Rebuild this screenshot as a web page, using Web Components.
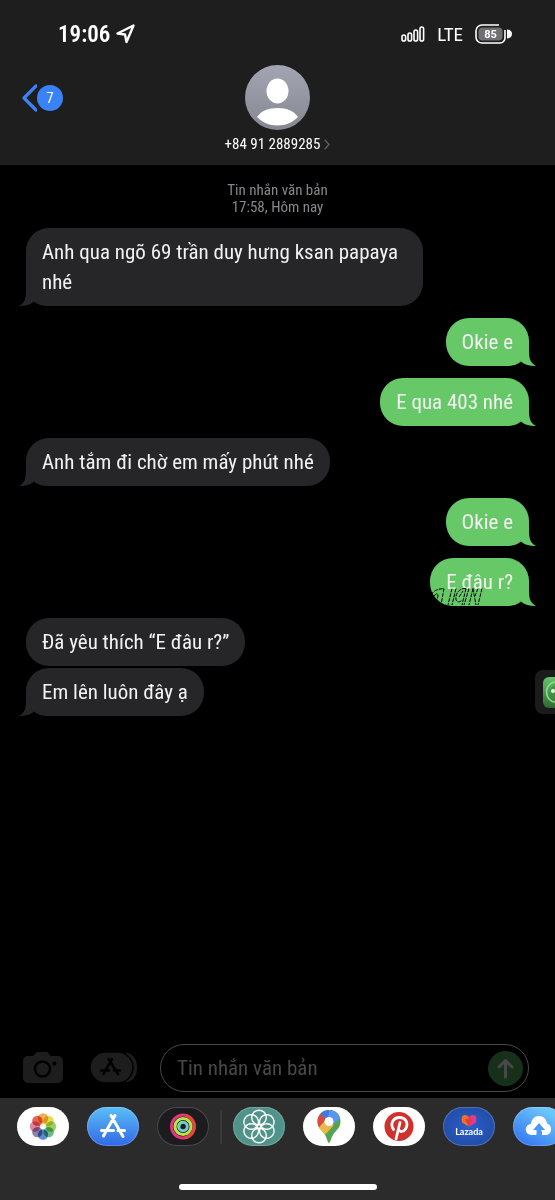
<!DOCTYPE html>
<html lang="vi">
<head>
<meta charset="utf-8">
<meta name="viewport" content="width=device-width, initial-scale=1">
<title>Tin nhắn</title>
<style>
  body {
    margin: 0;
    background: #000;
    color: #f2f2f2;
    font-family: "Roboto Condensed", Roboto, sans-serif;
  }
</style>
</head>
<body>
<message-screen>
  <status-bar slot="header" time="19:06" network="LTE" battery="85"></status-bar>
  <contact-bar slot="header" unread="7">+84 91 2889285</contact-bar>
  <chat-stamp>Tin nhắn văn bản<br>17:58, Hôm nay</chat-stamp>
  <chat-bubble tail>Anh qua ngõ 69 trần duy hưng ksan papaya nhé</chat-bubble>
  <chat-bubble sent tail>Okie e</chat-bubble>
  <chat-bubble sent tail>E qua 403 nhé</chat-bubble>
  <chat-bubble tail>Anh tắm đi chờ em mấy phút nhé</chat-bubble>
  <chat-bubble sent tail>Okie e</chat-bubble>
  <chat-bubble sent tail scribble>E đâu r?</chat-bubble>
  <chat-bubble stacked>Đã yêu thích “E đâu r?”</chat-bubble>
  <chat-bubble tail peek>Em lên luôn đây ạ</chat-bubble>
  <message-composer slot="footer" placeholder="Tin nhắn văn bản"></message-composer>
  <app-drawer slot="footer">
    <app-pill app="photos"></app-pill>
    <app-pill app="store"></app-pill>
    <app-pill app="rings"></app-pill>
    <drawer-divider></drawer-divider>
    <app-pill app="flower"></app-pill>
    <app-pill app="maps"></app-pill>
    <app-pill app="pinterest"></app-pill>
    <app-pill app="lazada">Lazada</app-pill>
    <app-pill app="cloud"></app-pill>
  </app-drawer>
</message-screen>

<script>
class BaseElement extends HTMLElement {
  connectedCallback() {
    if (!this.shadowRoot) {
      this.attachShadow({ mode: "open" }).innerHTML = this.render()
    }
  }
}

// Page frame: header, scrolling thread, footer
class MessageScreen extends BaseElement {
  render() {
    return `
      <style>
        :host { display: flex; flex-direction: column; min-height: 100vh; overflow: hidden; }
        header { background: #1e1e1e; padding-bottom: 12px; }
        main {
          flex: 1;
          display: flex;
          flex-direction: column;
          align-items: flex-start;
          gap: 12px;
          padding: 17px 26px 24px;
        }
      </style>
      <header><slot name="header"></slot></header>
      <main><slot></slot></main>
      <footer><slot name="footer"></slot></footer>`
  }
}

class StatusBar extends BaseElement {
  render() {
    return `
      <style>
        :host {
          display: flex;
          align-items: center;
          justify-content: space-between;
          padding: 18px 43px 0 58px;
          height: 32px;
          color: #fff;
        }
        .group { display: flex; align-items: center; }
        .time { gap: 6px; font-size: 23px; font-weight: 600; }
        .signal { gap: 12px; font-size: 19px; }
        svg { display: block; }
        text { font: 700 11px Roboto, sans-serif; fill: #fff; }
      </style>
      <div class="group time">
        <span>${this.getAttribute("time")}</span>
        <svg width="19" height="20" viewBox="0 0 19 20" fill="none" stroke="#fff" stroke-width="2.400" stroke-linejoin="round">
          <path d="M1.5 9.5 17.5 1.5 10.5 18 9 10.5Z"/>
        </svg>
      </div>
      <div class="group signal">
        <svg width="24" height="16" viewBox="0 0 24 16" fill="none" stroke="#fff" stroke-width="1.600">
          <rect x="1" y="9" width="3.6" height="6" rx="1.8"/>
          <rect x="7" y="7" width="3.6" height="8" rx="1.8"/>
          <rect x="13" y="4" width="3.6" height="11" rx="1.8"/>
          <rect x="19" y="1" width="3.6" height="14" rx="1.8"/>
        </svg>
        <span>${this.getAttribute("network")}</span>
        <svg width="37" height="20" viewBox="0 0 37 20">
          <rect x="3.5" y="3.5" width="24" height="13" rx="4" fill="#707074"/>
          <path d="M24 1H7a6 6 0 0 0-6 6v6a6 6 0 0 0 6 6h18a5 5 0 0 0 5-5V6" fill="none" stroke="#fff" stroke-width="1.6"/>
          <path d="M32 5.500c3 0 5 2 5 4.500s-2 4.500-5 4.500Z" fill="#fff"/>
          <text x="15.500" y="14" text-anchor="middle">${this.getAttribute("battery")}</text>
        </svg>
      </div>`
  }
}

class ContactBar extends BaseElement {
  render() {
    return `
      <style>
        :host { display: grid; grid-template-columns: 1fr auto 1fr; padding: 15px 22px 0; }
        a { text-decoration: none; color: #fff; }
        .back { display: flex; align-items: center; height: 65px; justify-self: start; }
        .count {
          display: grid;
          place-items: center;
          width: 26px;
          height: 26px;
          border-radius: 50%;
          background: #3a82f7;
          font-size: 15px;
        }
        .contact { display: flex; flex-direction: column; align-items: center; gap: 6px; }
        .name { display: flex; align-items: center; gap: 4px; font-size: 15px; line-height: 17px; }
        svg { display: block; }
      </style>
      <a class="back" href="#" aria-label="Quay lại">
        <svg width="15" height="28" viewBox="0 0 15 28" fill="none" stroke="#3a82f7" stroke-width="3.200" stroke-linecap="round" stroke-linejoin="round">
          <path d="M14 2 2 14 14 26"/>
        </svg>
        <span class="count">${this.getAttribute("unread")}</span>
      </a>
      <a class="contact" href="#">
        <svg width="65" height="65" viewBox="0 0 65 65">
          <defs>
            <linearGradient id="g" x2="0" y2="1">
              <stop stop-color="#a3a6b2"/><stop offset="1" stop-color="#858891"/>
            </linearGradient>
          </defs>
          <circle cx="32.500" cy="32.500" r="32.500" fill="url(#g)"/>
          <ellipse cx="32.500" cy="26" rx="11" ry="12.500" fill="#fff"/>
          <path d="M12 52c4-6 11-9 20.500-9S49 46 53 52c-5 5-12 8.500-20.500 8.500S17 57 12 52Z" fill="#fff"/>
        </svg>
        <span class="name">
          <slot></slot>
          <svg width="6" height="11" viewBox="0 0 6 11" fill="none" stroke="#606064" stroke-width="1.300"><path d="M.7.7 5 5.500.7 10.300"/></svg>
        </span>
      </a>`
  }
}

class ChatStamp extends BaseElement {
  render() {
    return `
      <style>
        :host {
          display: block;
          align-self: center;
          text-align: center;
          color: #88888c;
          font-size: 15px;
          line-height: 17px;
        }
      </style>
      <slot></slot>`
  }
}

class ChatBubble extends BaseElement {
  render() {
    const tail = this.hasAttribute("tail") ? `
      <svg class="tail" width="30" height="25" viewBox="0 0 30 25">
        <path d="M7 0V9C7 17 6 22 0 25C6 25 11 24 15 20.500Q20 25 30 25V0Z"/>
      </svg>` : ""
    const scribble = this.hasAttribute("scribble") ? `
      <svg class="scribble" width="53" height="18" viewBox="0 0 53 18" fill="none" stroke="#000" stroke-dasharray="4 1">
        <path d="M1 7C4 2 8 1 14 .5L11 17M4 8c3-3 4-3 4 0L6 15M22 .500 18 17M26 .500 22 17M36 .500C29 0 25 6 26 12c2 3 4 2 6 0M36 .500 32 17M39 .500 34 17M29 9l4-6M43 .500 39 17M43 .500 46 17M52 .500 48 17M48 .500 45 8"/>
      </svg>` : ""
    // small floating thumbnail that sticks out of the right screen edge
    const peek = this.hasAttribute("peek") ? `
      <svg class="peek" width="20" height="44" viewBox="0 0 20 44">
        <defs>
          <linearGradient id="p" x2="0" y2="1"><stop stop-color="#64c36a"/><stop offset="1" stop-color="#2d6b31"/></linearGradient>
        </defs>
        <rect width="40" height="44" rx="8" fill="#1b1b1c"/>
        <rect x="8" y="7" width="30" height="31" rx="6" fill="url(#p)"/>
        <circle cx="22" cy="22" r="10.500" fill="none" stroke="#93d997" stroke-width="1.500"/>
        <circle cx="22" cy="22" r="6" fill="none" stroke="#3e8f44" stroke-width="1.500"/>
        <circle cx="18" cy="21" r="2" fill="#e4f3e4"/>
      </svg>` : ""
    return `
      <style>
        :host { display: flex; align-items: center; width: 100%; --fill: #262628; }
        :host([sent]) { justify-content: flex-end; --fill: #67c868; }
        :host([stacked]) { margin-bottom: -10px; }
        .bubble {
          position: relative;
          box-sizing: border-box;
          max-width: 79%;
          padding: 9px 16px;
          border-radius: 23px;
          background: var(--fill);
          font-size: 21px;
          line-height: 30px;
        }
        .tail { position: absolute; left: -7px; bottom: 0; fill: var(--fill); }
        :host([sent]) .tail { left: auto; right: -7px; transform: scaleX(-1); }
        .text { position: relative; }
        .scribble { position: absolute; left: 0; bottom: 0; }
        .peek { position: absolute; right: 0; }
      </style>
      <div class="bubble">${tail}<span class="text"><slot></slot></span>${scribble}</div>${peek}`
  }
}

class MessageComposer extends BaseElement {
  render() {
    return `
      <style>
        :host { display: flex; align-items: center; padding: 0 26px 6px 23px; }
        button { border: 0; padding: 0; background: none; display: block; }
        svg { display: block; }
        .camera { margin-right: 27px; }
        .apps { margin-right: 22px; }
        .field {
          flex: 1;
          min-width: 0;
          box-sizing: border-box;
          display: flex;
          align-items: center;
          height: 48px;
          border: 1px solid #48484a;
          border-radius: 24px;
          padding: 0 5px 0 16px;
        }
        input {
          flex: 1;
          min-width: 0;
          border: 0;
          padding: 0;
          outline: 0;
          background: none;
          color: #f2f2f2;
          font: inherit;
          font-size: 21px;
        }
        input::placeholder { color: #48484a; opacity: 1; }
      </style>
      <button class="camera" aria-label="Máy ảnh">
        <svg width="40" height="32" viewBox="0 0 40 32">
          <path d="M5 4h5l4-4h10l4 4h7a5 5 0 0 1 5 5v17a5 5 0 0 1-5 5H5a5 5 0 0 1-5-5V9a5 5 0 0 1 5-5Z" fill="#1d1d1e"/>
          <circle cx="19.500" cy="17" r="7.500" fill="none" stroke="#000" stroke-width="2.500"/>
          <circle cx="31.500" cy="11.500" r="2" fill="#000"/>
        </svg>
      </button>
      <button class="apps" aria-label="Ứng dụng">
        <svg width="48" height="32" viewBox="0 0 48 32">
          <path d="M36 .500C51 3 51 28 36 30.500Z" fill="#1d1d1e"/>
          <rect width="43" height="31" rx="15.500" fill="#1d1d1e" stroke="#000" stroke-width="1.500"/>
          <path d="M22 7 13.500 22M18.500 7 28 22M11 18.500h8M24 18.500h6" fill="none" stroke="#000" stroke-width="2.500" stroke-linecap="round"/>
        </svg>
      </button>
      <div class="field">
        <input type="text" aria-label="${this.getAttribute("placeholder")}" placeholder="${this.getAttribute("placeholder")}">
        <button aria-label="Gửi">
          <svg width="35" height="35" viewBox="0 0 35 35" fill="none" stroke="#48484a" stroke-width="3" stroke-linecap="round" stroke-linejoin="round">
            <circle cx="17.500" cy="17.500" r="17.500" fill="#17301a" stroke="none"/>
            <path d="M17.500 26V9.500M11 16 17.500 9.500 24 16"/>
          </svg>
        </button>
      </div>`
  }
}

class AppDrawer extends BaseElement {
  render() {
    return `
      <style>
        :host { display: block; background: #2b2b2b; padding: 9px 0 10px; }
        .row { display: flex; gap: 18px; padding-left: 17px; overflow: hidden; }
        .home { width: 198px; height: 6px; margin: 38px auto 0; border-radius: 3px; background: #fff; }
      </style>
      <div class="row"><slot></slot></div>
      <div class="home"></div>`
  }
}

class DrawerDivider extends BaseElement {
  render() {
    return `
      <style>
        :host { width: 2px; height: 34px; flex: none; align-self: center; margin: 0 -7px; background: #3a3a3c; }
      </style>`
  }
}

const petals = (n, draw) => Array.from({ length: n }, (_, i) => draw(i, i * 360 / n)).join("")

const APPS = {
  photos: {
    label: "Ảnh",
    background: "#fff",
    art: () => petals(8, (i, a) => {
      const colors = ["#f0a030", "#e3d436", "#8cc84b", "#4fae72", "#3d78c8", "#7a6fa6", "#d8718c", "#e04a3c"]
      return `<circle cx="26" cy="11.500" r="5.200" fill="${colors[i]}" fill-opacity=".85" style="mix-blend-mode:multiply" transform="rotate(${a} 26 19.500)"/>`
    })
  },
  store: {
    label: "App Store",
    background: "linear-gradient(#5bbdf6, #3069e8)",
    art: () => `<path d="M28 8.500 17.500 27M24 8.500 36 29.500M14.500 23.500h12M31 23.500h6.500M17.500 27 16.500 29" fill="none" stroke="#fff" stroke-width="3" stroke-linecap="round"/>`
  },
  rings: {
    label: "Hoạt động",
    background: "#1c1c1e",
    art: () => `
      <g fill="none" stroke-width="3">
        <circle cx="26" cy="19.500" r="11.500" stroke="#e2357f"/>
        <path d="M29 8.500A11.500 11.500 0 0 1 28 30.800" stroke="#e5483a"/>
        <circle cx="26" cy="19.500" r="8" stroke="#b8e34a"/>
        <circle cx="26" cy="19.500" r="4.300" stroke="#74c7e0"/>
        <path d="M26 15.200a4.300 4.300 0 0 0-4 5.600" stroke="#73d6a0"/>
      </g>`
  },
  flower: {
    label: "Trò chuyện",
    background: "#4f9389",
    art: () => `<g fill="none" stroke="#fff" stroke-width="1.400">${petals(6, (i, a) =>
      `<circle cx="26" cy="10.500" r="7.300" transform="rotate(${a} 26 19.500)"/>`)}</g>`
  },
  maps: {
    label: "Bản đồ",
    background: "#fff",
    art: () => `
      <defs><clipPath id="pin"><path d="M26 3C19 3 14.500 8.500 14.500 14.500c0 6 4 8.500 7 12.500 2.500 3.500 3 9 4.500 9s2-5.500 4.500-9c3-4 7-6.500 7-12.500C37.500 8.500 33 3 26 3Z"/></clipPath></defs>
      <g clip-path="url(#pin)">
        <path d="M14 0h24v39H14Z" fill="#54a353"/>
        <path d="M14 0h24v9L26 14.500 18 8Z" fill="#4477df"/>
        <path d="M27 0h12v9L31 17 25 10Z" fill="#5b96ed"/>
        <path d="M10 4 18 7.500 25 14 15 25H10Z" fill="#d94b40"/>
        <path d="M14 22.500 22.500 13 31 18 20 30Z" fill="#ecb846"/>
      </g>
      <circle cx="26" cy="14.500" r="4.500" fill="#fff"/>`
  },
  pinterest: {
    label: "Pinterest",
    background: "#fff",
    art: () => `
      <circle cx="26" cy="19.500" r="14.500" fill="#d0312d"/>
      <path d="M20.500 22.500c-4-6 0-12 6-12s8.500 5 7 9.500-6.500 6-8 2.500M27 15.500 23 32" fill="none" stroke="#fff" stroke-width="2.800" stroke-linecap="round"/>`
  },
  lazada: {
    label: "Lazada",
    background: "radial-gradient(#2b5fd0, #1f4796)",
    art: () => `
      <path d="M26 19.500 19.500 16c-1-.6-1.200-6 0-7 2-1.500 4.500-1.300 6.500 1.500Z" fill="#f0702c"/>
      <path d="M26 19.500 32.500 16c1-.6 1.200-6 0-7-2-1.500-4.500-1.300-6.500 1.500Z" fill="#e8388c"/>
      <path d="M22 12.500 26 11 30 12.500 26 19.500Z" fill="#e33b45"/>`
  },
  cloud: {
    label: "Đám mây",
    background: "linear-gradient(30deg, #3478f0 10%, #6cc6fa 80%)",
    art: () => `
      <path d="M23 28h-4.500a5.500 5.500 0 0 1-.5-11c.5-4.500 3.500-8 8-8s7.500 3.500 8 7.500a6 6 0 0 1-.5 11.500H29V24Z" fill="#fff"/>
      <path d="M26 16 32 23H28.500V29H23.500V23H20Z" fill="#4c98f4"/>`
  }
}

class AppPill extends BaseElement {
  render() {
    const app = APPS[this.getAttribute("app")]
    return `
      <style>
        :host { display: block; flex: none; }
        button {
          display: grid;
          width: 52px;
          height: 39px;
          padding: 0;
          border: 0;
          border-radius: 21px;
          overflow: hidden;
          background: ${app.background};
          box-shadow: inset 0 0 0 1px rgba(255, 255, 255, .2);
        }
        svg, span { grid-area: 1 / 1; display: block; }
        span {
          align-self: end;
          justify-self: center;
          padding-bottom: 8px;
          color: #fff;
          font: 700 9px/12px Lato, sans-serif;
        }
      </style>
      <button aria-label="${app.label}">
        <svg width="52" height="39" viewBox="0 0 52 39">${app.art()}</svg>
        <span><slot></slot></span>
      </button>`
  }
}

customElements.define("message-screen", MessageScreen)
customElements.define("status-bar", StatusBar)
customElements.define("contact-bar", ContactBar)
customElements.define("chat-stamp", ChatStamp)
customElements.define("chat-bubble", ChatBubble)
customElements.define("message-composer", MessageComposer)
customElements.define("app-drawer", AppDrawer)
customElements.define("drawer-divider", DrawerDivider)
customElements.define("app-pill", AppPill)
</script>
</body>
</html>
